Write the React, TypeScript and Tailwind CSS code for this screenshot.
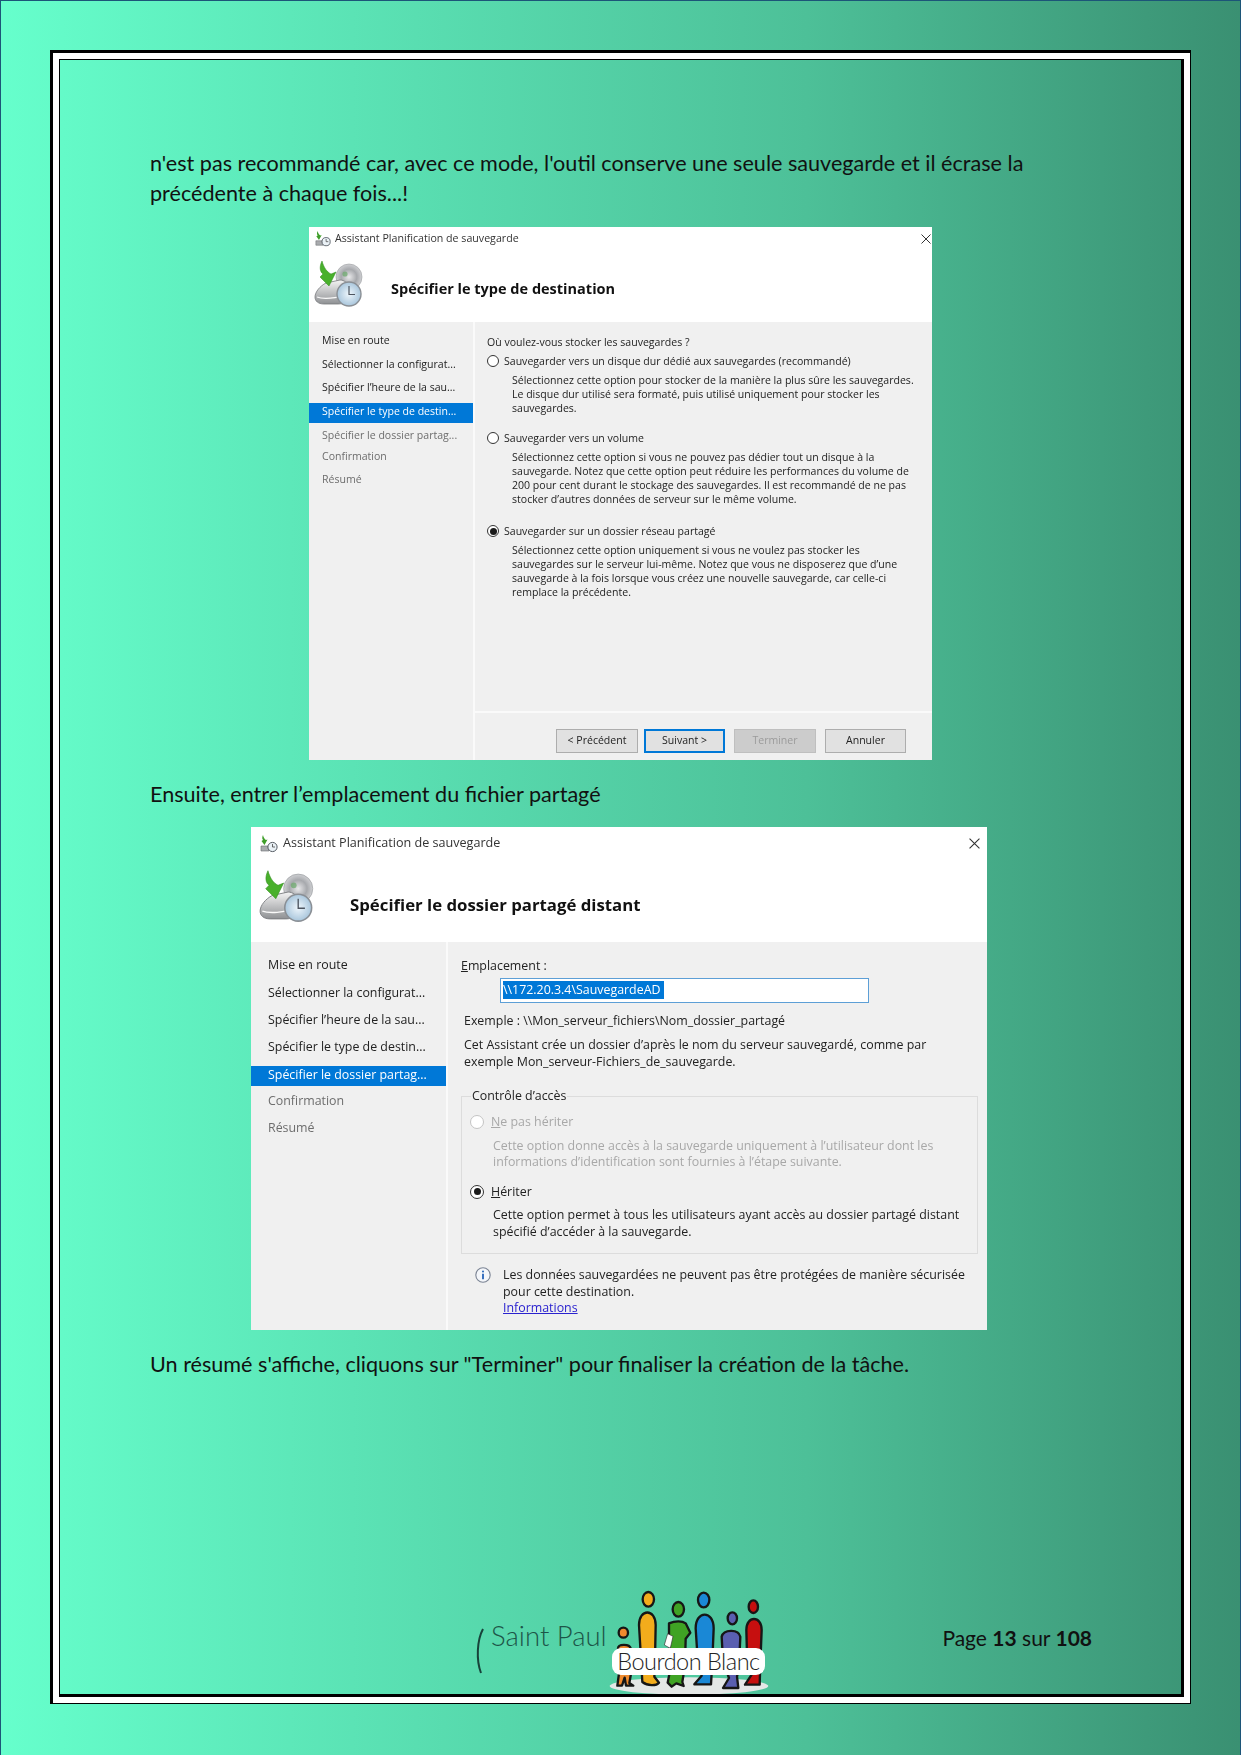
const dialogFont = { fontFamily: '"Open Sans", "Noto Sans", sans-serif' };

function BackupIcon({ className }: { className: string }) {
  return (
    <svg viewBox="0 0 50 46" className={className}>
      <defs>
        <linearGradient id="driveFill" x1="0" y1="0" x2="0" y2="1">
          <stop offset="0" stopColor="#f4f4f4" />
          <stop offset="1" stopColor="#8f9194" />
        </linearGradient>
        <radialGradient id="discFill">
          <stop offset="0" stopColor="#e8e8ea" />
          <stop offset="0.6" stopColor="#a7a9ad" />
          <stop offset="1" stopColor="#cfd0d3" />
        </radialGradient>
        <radialGradient id="clockFill">
          <stop offset="0" stopColor="#eef6fc" />
          <stop offset="1" stopColor="#a9c6dc" />
        </radialGradient>
      </defs>
      <circle cx="35" cy="16" r="13" fill="url(#discFill)" stroke="#9a9ca0" strokeWidth="0.6" />
      <circle cx="31" cy="13" r="2.6" fill="#6aa86a" opacity="0.7" />
      <path d="M1 36c0-5 5-11 11-14l14-3c4 0 8 3 9 7l1 9c0 5-6 8-12 8H10c-6 0-9-3-9-7z" fill="url(#driveFill)" stroke="#77797c" strokeWidth="0.8" />
      <path d="M3 36c5 2 20 2 30-3" fill="none" stroke="#fafafa" strokeWidth="1.2" />
      <circle cx="35" cy="33" r="12" fill="url(#clockFill)" stroke="#8a8f95" strokeWidth="1.4" />
      <path d="M35 25v8.5h6" fill="none" stroke="#4d5560" strokeWidth="1.2" />
      <path d="M8 0C5 6 6 11 9 13L6 16 15 25 22 11 17 13C13 11 10 7 8 0z" fill="#49b02c" stroke="#2f8a1b" strokeWidth="0.5" />
    </svg>
  );
}

function TitleIcon({ className }: { className: string }) {
  return (
    <svg viewBox="0 0 18 18" className={className}>
      <path d="M3 0C2 2 2 4 3 5L1.500 6 4.500 10 7.500 4.500 6 5C4.500 4 3.500 2.500 3 0z" fill="#3f9e2a" />
      <path d="M1 11h7l1 5H1z" fill="#a9abae" stroke="#6a6c70" strokeWidth="0.6" />
      <circle cx="12.500" cy="12" r="4.600" fill="#eaf1f6" stroke="#555b63" strokeWidth="1" />
      <path d="M12.500 9v3h2.500" fill="none" stroke="#444" strokeWidth="0.8" />
    </svg>
  );
}

function CloseIcon({ className }: { className: string }) {
  return (
    <svg viewBox="0 0 10 10" className={className}>
      <path d="M0.5 0.5l9 9M9.5 0.5l-9 9" stroke="#333" strokeWidth="1" fill="none" />
    </svg>
  );
}

function Radio({ checked, disabled, className }: { checked?: boolean; disabled?: boolean; className: string }) {
  return (
    <span className={`flex shrink-0 items-center justify-center rounded-full border bg-white ${disabled ? "border-[#c4c4c4]" : "border-[#333]"} ${className}`}>
      {checked && <span className="h-[7px] w-[7px] rounded-full bg-[#1a1a1a]" />}
    </span>
  );
}

function WizardButton({ label, variant, className }: { label: string; variant?: "primary" | "disabled"; className: string }) {
  const look =
    variant === "primary"
      ? "border-2 border-[#0078d7] bg-[#e1e1e1] text-[#222]"
      : variant === "disabled"
        ? "border border-[#bfbfbf] bg-[#cccccc] text-[#9b9b9b]"
        : "border border-[#adadad] bg-[#e1e1e1] text-[#222]";
  return <div className={`flex h-[24px] items-center justify-center ${look} ${className}`}>{label}</div>;
}

function FirstDialog() {
  return (
    <div className="ml-[249px] flex h-[533px] w-[623px] flex-col bg-[#f0f0f0] text-[10.55px] text-[#222] blur-[0.35px]" style={dialogFont}>
      <div className="h-[95px] bg-white">
        <div className="flex h-[22px] items-center pl-[6px] pt-[1px]">
          <TitleIcon className="h-[16px] w-[16px]" />
          <span className="ml-[4px] text-[10.65px] text-[#333]">Assistant Planification de sauvegarde</span>
          <CloseIcon className="ml-auto mr-[1px] h-[10px] w-[10px]" />
        </div>
        <div className="flex items-center pl-[5px] pt-[12px]">
          <BackupIcon className="h-[46px] w-[50px]" />
          <span className="ml-[27px] mt-[10px] text-[14.5px] font-bold text-[#111]">Spécifier le type de destination</span>
        </div>
      </div>
      <div className="flex min-h-0 flex-1">
        <div className="w-[166px] border-r-2 border-[#fafafa] pt-[9px]">
          <div className="flex h-[20px] items-center pl-[13px]">Mise en route</div>
          <div className="mt-[4px] flex h-[20px] items-center pl-[13px]">Sélectionner la configurat...</div>
          <div className="mt-[3px] flex h-[20px] items-center pl-[13px]">Spécifier l’heure de la sau...</div>
          <div className="mt-[5px] flex h-[20px] items-center bg-[#0078d7] pb-[3px] pl-[13px] text-white">Spécifier le type de destin...</div>
          <div className="mt-[3px] flex h-[20px] items-center pl-[13px] text-[#6d6d6d]">Spécifier le dossier partag...</div>
          <div className="mt-[1px] flex h-[20px] items-center pl-[13px] text-[#6d6d6d]">Confirmation</div>
          <div className="mt-[3px] flex h-[20px] items-center pl-[13px] text-[#6d6d6d]">Résumé</div>
        </div>
        <div className="flex flex-1 flex-col">
          <div className="pl-[12px] pt-[13px] leading-[14px]">
            <div>Où voulez-vous stocker les sauvegardes ?</div>
            <div className="mt-[5px] flex items-center">
              <Radio className="h-[12px] w-[12px]" />
              <span className="ml-[5px]">Sauvegarder vers un disque dur dédié aux sauvegardes (recommandé)</span>
            </div>
            <div className="ml-[25px] mt-[5px] whitespace-nowrap">
              Sélectionnez cette option pour stocker de la manière la plus sûre les sauvegardes.
              <br />
              Le disque dur utilisé sera formaté, puis utilisé uniquement pour stocker les
              <br />
              sauvegardes.
            </div>
            <div className="mt-[16px] flex items-center">
              <Radio className="h-[12px] w-[12px]" />
              <span className="ml-[5px]">Sauvegarder vers un volume</span>
            </div>
            <div className="ml-[25px] mt-[5px] whitespace-nowrap">
              Sélectionnez cette option si vous ne pouvez pas dédier tout un disque à la
              <br />
              sauvegarde. Notez que cette option peut réduire les performances du volume de
              <br />
              200 pour cent durant le stockage des sauvegardes. Il est recommandé de ne pas
              <br />
              stocker d’autres données de serveur sur le même volume.
            </div>
            <div className="mt-[18px] flex items-center">
              <Radio checked className="h-[12px] w-[12px]" />
              <span className="ml-[5px]">Sauvegarder sur un dossier réseau partagé</span>
            </div>
            <div className="ml-[25px] mt-[5px] whitespace-nowrap">
              Sélectionnez cette option uniquement si vous ne voulez pas stocker les
              <br />
              sauvegardes sur le serveur lui-même. Notez que vous ne disposerez que d’une
              <br />
              sauvegarde à la fois lorsque vous créez une nouvelle sauvegarde, car celle-ci
              <br />
              remplace la précédente.
            </div>
          </div>
          <div className="mt-auto flex h-[49px] justify-end border-t-2 border-[#fafafa] pr-[26px] pt-[16px]">
            <WizardButton label="< Précédent" className="w-[82px]" />
            <WizardButton label="Suivant >" variant="primary" className="ml-[6px] w-[81px]" />
            <WizardButton label="Terminer" variant="disabled" className="ml-[9px] w-[82px]" />
            <WizardButton label="Annuler" className="ml-[9px] w-[81px]" />
          </div>
        </div>
      </div>
    </div>
  );
}

function SecondDialog() {
  return (
    <div className="ml-[191px] flex h-[503px] w-[736px] flex-col bg-[#f0f0f0] text-[12.4px] text-[#222] blur-[0.35px]" style={dialogFont}>
      <div className="h-[115px] bg-white">
        <div className="flex h-[32px] items-center pl-[9px] pt-[1px]">
          <TitleIcon className="h-[18px] w-[18px]" />
          <span className="ml-[5px] text-[12.6px] text-[#333]">Assistant Planification de sauvegarde</span>
          <CloseIcon className="ml-auto mr-[7px] h-[11px] w-[11px]" />
        </div>
        <div className="flex items-center pl-[8px] pt-[10px]">
          <BackupIcon className="h-[55px] w-[56px]" />
          <span className="ml-[35px] mt-[16px] text-[16.8px] font-bold text-[#111]">Spécifier le dossier partagé distant</span>
        </div>
      </div>
      <div className="flex min-h-0 flex-1">
        <div className="w-[197px] border-r-2 border-[#fafafa] pt-[13px]">
          <div className="flex h-[20px] items-center pl-[17px]">Mise en route</div>
          <div className="mt-[8px] flex h-[20px] items-center pl-[17px]">Sélectionner la configurat...</div>
          <div className="mt-[7px] flex h-[20px] items-center pl-[17px]">Spécifier l’heure de la sau...</div>
          <div className="mt-[7px] flex h-[20px] items-center pl-[17px]">Spécifier le type de destin...</div>
          <div className="mt-[9px] flex h-[20px] items-center bg-[#0078d7] pb-[1px] pl-[17px] text-white">Spécifier le dossier partag...</div>
          <div className="mt-[5px] flex h-[20px] items-center pl-[17px] text-[#6d6d6d]">Confirmation</div>
          <div className="mt-[7px] flex h-[20px] items-center pl-[17px] text-[#6d6d6d]">Résumé</div>
        </div>
        <div className="flex-1 pl-[13px] pt-[16px] leading-[16.5px]">
          <div>
            <span className="underline">E</span>mplacement :
          </div>
          <div className="ml-[39px] mt-[3px] flex h-[25px] w-[369px] items-center border border-[#5d9fd6] bg-white pl-[2px]">
            <span className="bg-[#0078d7] pr-[4px] leading-[18px] text-white">\\172.20.3.4\SauvegardeAD</span>
          </div>
          <div className="ml-[3px] mt-[10px]">Exemple : \\Mon_serveur_fichiers\Nom_dossier_partagé</div>
          <div className="ml-[3px] mt-[8px] whitespace-nowrap">
            Cet Assistant crée un dossier d’après le nom du serveur sauvegardé, comme par
            <br />
            exemple Mon_serveur-Fichiers_de_sauvegarde.
          </div>
          <div className="relative mt-[26px] h-[158px] w-[517px] border border-[#dcdcdc] pl-[8px] pt-[17px]">
            <span className="absolute left-[9px] top-[-9px] bg-[#f0f0f0] px-[1px]">Contrôle d’accès</span>
            <div className="flex items-center text-[#a8a8a8]">
              <Radio disabled className="h-[14px] w-[14px]" />
              <span className="ml-[7px]">
                <span className="underline">N</span>e pas hériter
              </span>
            </div>
            <div className="ml-[23px] mt-[7px] whitespace-nowrap text-[#a8a8a8]">
              Cette option donne accès à la sauvegarde uniquement à l’utilisateur dont les
              <br />
              informations d’identification sont fournies à l’étape suivante.
            </div>
            <div className="mt-[13px] flex items-center">
              <Radio checked className="h-[14px] w-[14px]" />
              <span className="ml-[7px]">
                <span className="underline">H</span>ériter
              </span>
            </div>
            <div className="ml-[23px] mt-[7px] whitespace-nowrap">
              Cette option permet à tous les utilisateurs ayant accès au dossier partagé distant
              <br />
              spécifié d’accéder à la sauvegarde.
            </div>
          </div>
          <div className="ml-[14px] mt-[13px] flex items-start">
            <svg viewBox="0 0 16 16" className="h-[16px] w-[16px] shrink-0">
              <circle cx="8" cy="8" r="7.2" fill="#f4f6fa" stroke="#7b8494" strokeWidth="1.1" />
              <circle cx="8" cy="4.4" r="1" fill="#2563b8" />
              <path d="M8 6.8v5.4" stroke="#2563b8" strokeWidth="1.8" />
            </svg>
            <div className="ml-[12px] whitespace-nowrap">
              Les données sauvegardées ne peuvent pas être protégées de manière sécurisée
              <br />
              pour cette destination.
              <br />
              <span className="text-[#2a22cf] underline">Informations</span>
            </div>
          </div>
        </div>
      </div>
    </div>
  );
}

function SchoolLogo() {
  const stroke = { stroke: "#161616", strokeWidth: 7, strokeLinejoin: "round" as const };
  return (
    <div className="relative ml-[5px] h-[104px] w-[160px]">
      <svg viewBox="420 60 480 312" className="h-[104px] w-[160px]">
        <ellipse cx="660" cy="348" rx="238" ry="26" fill="#e4e7e6" />
        <ellipse cx="463" cy="188" rx="14" ry="15" fill="#ef8a2e" {...stroke} />
        <path d="M447 235c0-14 35-14 38 0l4 60-8 44 12 8h-22l-4-24-8 24h-14l6-44z" fill="#ef8a2e" {...stroke} />
        <ellipse cx="538" cy="88" rx="17" ry="22" fill="#f2ac1c" {...stroke} />
        <path d="M510 165c0-50 50-50 50 0l-2 105-2 50 14 18c-8 10-34 10-50-2l-4-70z" fill="#f2ac1c" {...stroke} />
        <ellipse cx="628" cy="118" rx="17" ry="22" fill="#3fa324" {...stroke} />
        <path d="M600 160c18-8 40-8 50 0l14 28-14 18-2 80 -8 50 4 12-22-8-14 10-12-12 10-50-6-90z" fill="#3fa324" {...stroke} />
        <path d="M586 225l10-34 16 8-8 36z" fill="#ffffff" stroke="#333" strokeWidth="2" />
        <ellipse cx="704" cy="90" rx="17" ry="22" fill="#1a88d6" {...stroke} />
        <path d="M680 175c0-55 54-55 54 0l-4 100-4 68h-50l22-26-14-80z" fill="#1a88d6" {...stroke} />
        <ellipse cx="790" cy="145" rx="14" ry="18" fill="#5a5fb0" {...stroke} />
        <path d="M758 200c6-22 50-24 56 0l-4 90-6 30 4 34h-46l18-30-18-50z" fill="#5a5fb0" {...stroke} />
        <ellipse cx="853" cy="110" rx="14" ry="19" fill="#c60f0f" {...stroke} />
        <path d="M832 180c0-44 46-44 46 0l-4 100-2 64h-44l20-30-14-60z" fill="#c60f0f" {...stroke} />
      </svg>
      <div className="absolute left-[3px] top-[58px] flex h-[27px] w-[153px] items-center justify-center rounded-[9px] bg-white text-[23.5px] font-light tracking-[-0.5px] text-[#222]" style={{ fontFamily: "Lato, sans-serif" }}>
        Bourdon Blanc
      </div>
    </div>
  );
}

export default function App() {
  return (
    <div className="flex h-[1755px] w-[1241px] flex-col border-l border-r border-t border-[#1c5578] bg-gradient-to-r from-[#66ffcc] via-[#4dc098] via-65% to-[#3a9072] pl-[49px] pt-[49px]">
      <div className="h-[1654px] w-[1141px] border-b border-l-[3px] border-r border-t-[3px] border-black">
        <div className="h-full w-full border-[6px] border-white">
          <div className="flex h-full w-full flex-col border-b-[3px] border-l border-r-[3px] border-t border-black text-[#111]" style={{ fontFamily: "Lato, sans-serif" }}>
            <p className="ml-[90px] mt-[89px] whitespace-nowrap text-[21.6px] leading-[29.6px]">
              n'est pas recommandé car, avec ce mode, l'outil conserve une seule sauvegarde et il écrase la
              <br />
              précédente à chaque fois...!
            </p>
            <div className="mt-[19px]">
              <FirstDialog />
            </div>
            <p className="ml-[90px] mt-[19px] text-[21.6px] leading-[30px]">Ensuite, entrer l’emplacement du fichier partagé</p>
            <div className="mt-[18px]">
              <SecondDialog />
            </div>
            <p className="ml-[90px] mt-[19px] text-[21.6px] leading-[30px]">Un résumé s'affiche, cliquons sur "Terminer" pour finaliser la création de la tâche.</p>
            <div className="mt-auto flex h-[104px] items-start pl-[415px]">
              <svg viewBox="0 0 10 46" className="mt-[38px] h-[46px] w-[10px] shrink-0">
                <path d="M8 1C2 12 1 32 6 45" fill="none" stroke="#17433a" strokeWidth="2" />
              </svg>
              <span className="ml-[6px] mt-[31px] w-[113px] whitespace-nowrap text-[27.5px] font-light leading-[30px] text-[#1d5548]">Saint Paul</span>
              <SchoolLogo />
              <div className="ml-auto mr-[89px] mt-[33px] text-[21px] leading-[30px]">
                Page <b>13</b> sur <b>108</b>
              </div>
            </div>
          </div>
        </div>
      </div>
    </div>
  );
}
